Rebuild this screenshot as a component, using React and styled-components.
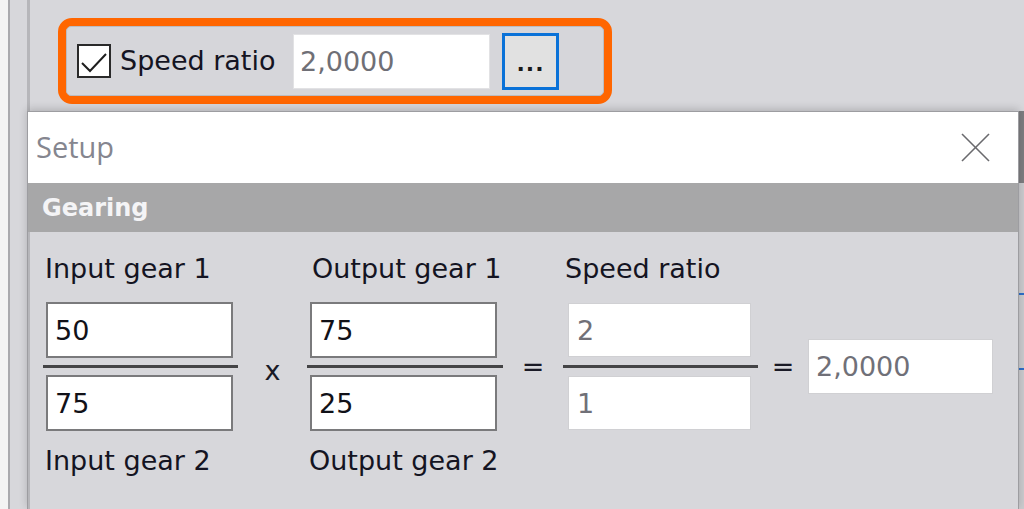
import React from "react";
import styled, { createGlobalStyle } from "styled-components";

const Global = createGlobalStyle`
  html, body { margin: 0; padding: 0; background: #d7d7db; }
  * { box-sizing: border-box; }
`;

const Screen = styled.div`
  width: 1024px;
  height: 509px;
  overflow: hidden;
  display: flex;
  background: #d7d7db;
  font-family: "DejaVu Sans", Verdana, sans-serif;
  color: #141422;
`;

const LeftStrip = styled.div`
  width: 10px;
  flex: none;
  background: #f3f3f3;
  border-right: 2px solid #a9a9ad;
`;

const Gutter = styled.div`
  width: 17px;
  flex: none;
`;

const Main = styled.div`
  flex: 1;
  display: flex;
  flex-direction: column;
  min-width: 0;
`;

const TopArea = styled.div`
  height: 111px;
  flex: none;
  border-left: 3px solid #b6b6ba;
  padding: 18px 0 0 28px;
`;

const Highlight = styled.div`
  width: 554px;
  height: 86px;
  border: 8px solid #ff6600;
  border-radius: 14px;
  background: #d6d6da;
`;

const Panel = styled.div`
  height: 100%;
  border: 1px solid #bcbcc0;
  border-radius: 5px;
  display: flex;
  align-items: center;
  padding-left: 10px;
`;

const CheckBox = styled.div`
  width: 34px;
  height: 34px;
  flex: none;
  background: #fff;
  border: 2px solid #2a2a2a;
  display: flex;
  align-items: center;
  justify-content: center;
`;

const CheckLabel = styled.span`
  width: 173px;
  flex: none;
  margin-left: 9px;
  font-size: 27px;
  line-height: 32px;
  white-space: nowrap;
`;

const ValueInput = styled.div`
  width: 197px;
  height: 55px;
  flex: none;
  background: #fff;
  border: 1px solid #e2e2e4;
  display: flex;
  align-items: center;
  padding-left: 6px;
  font-size: 27px;
  color: #6f6f76;
`;

const EllipsisButton = styled.div`
  width: 57px;
  height: 57px;
  flex: none;
  margin-left: 12px;
  border: 3px solid #0a72d8;
  background: #e1e1e1;
  display: flex;
  align-items: flex-end;
  justify-content: center;
  padding-bottom: 12px;
  font-size: 22px;
  font-weight: bold;
  line-height: 22px;
  letter-spacing: 1px;
  color: #1a1a1a;
`;

const DialogRow = styled.div`
  flex: 1;
  display: flex;
  min-height: 0;
`;

const Dialog = styled.div`
  flex: 1;
  display: flex;
  flex-direction: column;
  border: 1px solid #9d9da1;
  border-bottom: none;
  box-shadow: 0 -2px 8px rgba(0, 0, 0, 0.18);
  position: relative;
  z-index: 1;
`;

const TitleBar = styled.div`
  height: 71px;
  flex: none;
  background: #fff;
  display: flex;
  align-items: center;
  justify-content: space-between;
  padding: 0 28px 0 8px;
`;

const Title = styled.span`
  font-family: "Open Sans", "Noto Sans", sans-serif;
  font-size: 29px;
  color: #85868f;
  margin-top: -3px;
`;

const CloseIcon = styled.svg`
  width: 29px;
  height: 29px;
  display: block;
`;

const SectionHeader = styled.div`
  height: 49px;
  flex: none;
  background: #a7a7a8;
  display: flex;
  align-items: center;
  padding-left: 14px;
  font-size: 24px;
  font-weight: bold;
  color: #f4f4f6;
`;

const Body = styled.div`
  flex: 1;
  background: #d7d7db;
  border-left: 2px solid #b6b6ba;
  padding: 21px 0 0 13px;
  display: flex;
  align-items: flex-start;
`;

const Equation = styled.div`
  display: flex;
  align-items: stretch;
`;

const Fraction = styled.div`
  width: ${(p) => p.$w}px;
  display: flex;
  flex-direction: column;
`;

const FieldLabel = styled.div`
  height: 32px;
  font-size: 27px;
  line-height: 32px;
  white-space: nowrap;
  padding-left: ${(p) => p.$indent}px;
  margin-top: ${(p) => (p.$bottom ? 14 : 0)}px;
  margin-bottom: ${(p) => (p.$bottom ? 0 : 17)}px;
`;

const GearBox = styled.div`
  height: ${(p) => (p.$light ? 54 : 56)}px;
  margin: ${(p) => (p.$light ? 1 : 0)}px 0;
  margin-left: ${(p) => p.$inset}px;
  width: ${(p) => p.$bw}px;
  background: #fff;
  border: ${(p) => (p.$light ? "1px solid #d0d0d3" : "2px solid #7a7a7c")};
  display: flex;
  align-items: center;
  padding-left: ${(p) => (p.$light ? 8 : 7)}px;
  font-size: 27px;
  color: ${(p) => (p.$light ? "#707078" : "#111118")};
`;

const FractionBar = styled.div`
  height: 3px;
  margin: 7px 0;
  background: #444446;
`;

const Operator = styled.div`
  width: ${(p) => p.$w}px;
  display: flex;
  align-items: center;
  justify-content: center;
  padding-top: ${(p) => 49 + (p.$shift || 0)}px;
  padding-bottom: 46px;
  font-size: 27px;
  color: #1a1a26;
`;

const ResultBox = styled.div`
  width: 185px;
  height: 55px;
  background: #fff;
  border: 1px solid #d0d0d3;
  display: flex;
  align-items: center;
  padding-left: 7px;
  font-size: 27px;
  color: #707078;
`;

const ResultCell = styled.div`
  display: flex;
  align-items: center;
  padding-top: 49px;
  padding-bottom: 46px;
`;

const RightStrip = styled.div`
  width: 5px;
  flex: none;
  display: flex;
  flex-direction: column;
  background: #cbcbce;
`;

const StripTop = styled.div`
  height: 72px;
  background: #7d7d80;
`;

const Tick = styled.div`
  height: 2px;
  margin-top: ${(p) => p.$gap}px;
  background: #2f6fc9;
`;

function FractionColumn({ w, top, bottom, topIndent, bottomIndent, inset, bw, a, b, light }) {
  return (
    <Fraction $w={w}>
      <FieldLabel $indent={topIndent}>{top}</FieldLabel>
      <GearBox $inset={inset} $bw={bw} $light={light}>{a}</GearBox>
      <FractionBar />
      <GearBox $inset={inset} $bw={bw} $light={light}>{b}</GearBox>
      <FieldLabel $bottom $indent={bottomIndent}>{bottom}</FieldLabel>
    </Fraction>
  );
}

export default function App() {
  return (
    <>
      <Global />
      <Screen>
        <LeftStrip />
        <Gutter />
        <Main>
          <TopArea>
            <Highlight>
              <Panel>
                <CheckBox>
                  <svg width="30" height="30" viewBox="0 0 30 30">
                    <polyline points="3,17 11,25 27,8" fill="none" stroke="#1e1e1e" strokeWidth="2" />
                  </svg>
                </CheckBox>
                <CheckLabel>Speed ratio</CheckLabel>
                <ValueInput>2,0000</ValueInput>
                <EllipsisButton>...</EllipsisButton>
              </Panel>
            </Highlight>
          </TopArea>
          <DialogRow>
            <Dialog>
              <TitleBar>
                <Title>Setup</Title>
                <CloseIcon viewBox="0 0 29 29">
                  <line x1="1" y1="1" x2="28" y2="28" stroke="#6a6a6e" strokeWidth="1.6" />
                  <line x1="28" y1="1" x2="1" y2="28" stroke="#6a6a6e" strokeWidth="1.6" />
                </CloseIcon>
              </TitleBar>
              <SectionHeader>Gearing</SectionHeader>
              <Body>
                <Equation>
                  <FractionColumn
                    w={195}
                    top="Input gear 1"
                    bottom="Input gear 2"
                    topIndent={2}
                    bottomIndent={2}
                    inset={3}
                    bw={187}
                    a="50"
                    b="75"
                  />
                  <Operator $w={69} $shift={8}>x</Operator>
                  <FractionColumn
                    w={196}
                    top="Output gear 1"
                    bottom="Output gear 2"
                    topIndent={5}
                    bottomIndent={2}
                    inset={3}
                    bw={187}
                    a="75"
                    b="25"
                  />
                  <Operator $w={60}>=</Operator>
                  <FractionColumn
                    w={195}
                    top="Speed ratio"
                    bottom=""
                    topIndent={2}
                    bottomIndent={2}
                    inset={5}
                    bw={183}
                    a="2"
                    b="1"
                    light
                  />
                  <Operator $w={50}>=</Operator>
                  <ResultCell>
                    <ResultBox>2,0000</ResultBox>
                  </ResultCell>
                </Equation>
              </Body>
            </Dialog>
            <RightStrip>
              <StripTop />
              <Tick $gap={110} />
              <Tick $gap={73} />
            </RightStrip>
          </DialogRow>
        </Main>
      </Screen>
    </>
  );
}
